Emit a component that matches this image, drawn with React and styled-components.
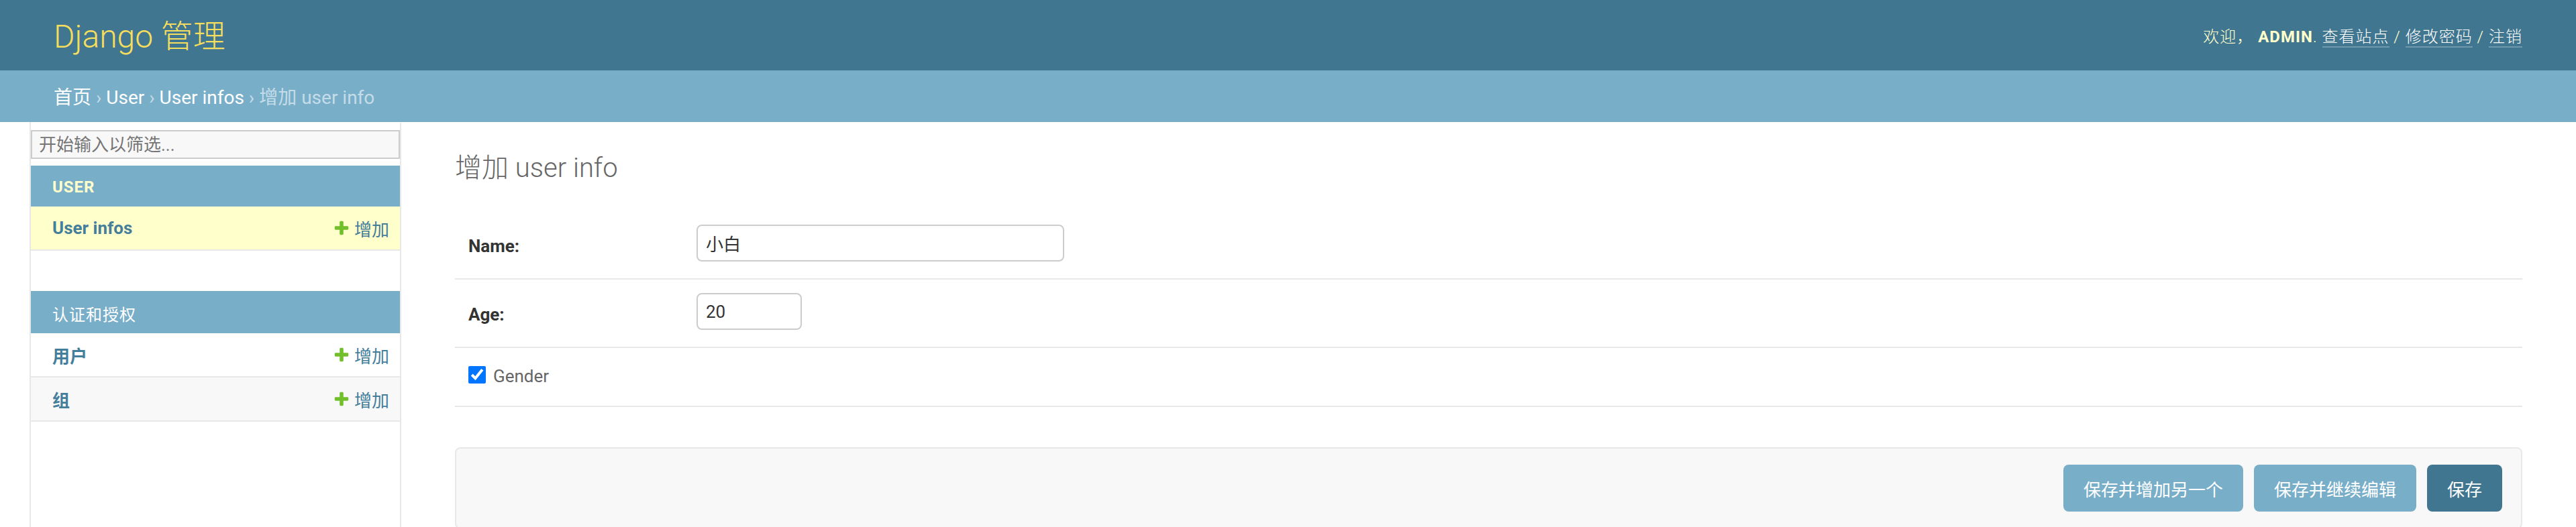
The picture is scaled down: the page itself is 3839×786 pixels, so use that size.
import styled, { createGlobalStyle } from "styled-components";

const GlobalStyle = createGlobalStyle`
  html, body {
    margin: 0;
    padding: 0;
  }
  body {
    font-family: Roboto, "Noto Sans CJK SC", sans-serif;
    color: #333;
    background: #fff;
  }
  #root {
    min-height: 100vh;
    display: flex;
    flex-direction: column;
  }
`

const Header = styled.header`
  display: flex;
  justify-content: space-between;
  align-items: center;
  box-sizing: border-box;
  height: 105px;
  padding: 0 80px;
  background: #417690;
  color: #ffc;
`

const SiteName = styled.h1`
  margin: 0;
  padding-top: 4px;
  font-size: 48px;
  font-weight: 300;
  line-height: 1;
  color: #f5dd5d;
`

const UserTools = styled.div`
  font-size: 24px;
  font-weight: 300;
  letter-spacing: 1px;
  text-transform: uppercase;
  color: #ffc;

  strong {
    font-weight: 700;
  }
`

const ToolLink = styled.a`
  color: #fff;
  text-decoration: none;
  border-bottom: 2px solid rgba(255, 255, 255, 0.25);
`

const Breadcrumbs = styled.div`
  box-sizing: border-box;
  height: 77px;
  padding: 4px 80px 0;
  line-height: 73px;
  font-size: 28px;
  background: #79aec8;
  color: #c4dce8;
`

const Crumb = styled.a`
  color: #fff;
  text-decoration: none;
`

const Main = styled.div`
  display: flex;
  flex: 1;
`

const SidebarToggle = styled.button`
  flex: 0 0 46px;
  padding: 0;
  border: none;
  border-right: 2px solid #e8e8e8;
  background: #fff;
`

const Sidebar = styled.nav`
  flex: 0 0 552px;
  box-sizing: border-box;
  border-top: 2px solid transparent;
  border-right: 2px solid #e8e8e8;
  background: #fff;
`

const NavFilter = styled.input`
  display: block;
  box-sizing: border-box;
  width: 100%;
  height: 43px;
  margin: 10px 0;
  padding: 0 10px;
  border: 2px solid #ccc;
  background: #f8f8f8;
  font-family: Roboto, "Noto Sans CJK SC", sans-serif;
  font-size: 26px;
  color: #333;

  &::placeholder {
    color: #757575;
  }
`

const AppSection = styled.div`
  margin-bottom: 60px;
`

const AppCaption = styled.div`
  box-sizing: border-box;
  height: ${p => p.$h}px;
  padding: 3px 32px 0;
  display: flex;
  align-items: center;
  background: #79aec8;
  color: ${p => (p.$current ? "#ffc" : "#fff")};
  font-size: 24px;
  font-weight: ${p => (p.$current ? 700 : 400)};
  letter-spacing: 1px;
  text-transform: uppercase;
`

const ModelRow = styled.div`
  display: flex;
  justify-content: space-between;
  align-items: center;
  height: 64px;
  padding: 0 16px 0 32px;
  border-bottom: 2px solid #e8e8e8;
  background: ${p => (p.$current ? "#ffc" : p.$even ? "#f8f8f8" : "#fff")};
  font-size: 26px;
`

const ModelLink = styled.a`
  color: #447e9b;
  font-weight: 700;
  text-decoration: none;
`

const AddLink = styled.a`
  display: inline-flex;
  align-items: center;
  color: #447e9b;
  text-decoration: none;

  svg {
    margin-right: 6px;
  }
`

const Content = styled.div`
  flex: 1;
  padding: 40px 80px;
`

const Title = styled.h1`
  margin: 0 0 37px;
  padding-top: 2px;
  font-size: 40px;
  font-weight: 300;
  line-height: 54px;
  color: #666;
`

const Fieldset = styled.div`
  margin-bottom: 60px;
`

const FormRow = styled.div`
  display: flex;
  align-items: flex-start;
  padding: 20px;
  border-bottom: 2px solid #e8e8e8;
`

const Label = styled.label`
  box-sizing: border-box;
  width: 340px;
  padding: 19px 20px 0 0;
  font-size: 26px;
  font-weight: 700;
  line-height: 26px;
  color: #333;
`

const Field = styled.div`
  min-height: 60px;
`

const TextInput = styled.input`
  box-sizing: border-box;
  width: ${p => p.$w}px;
  height: 55px;
  padding: 0 12px;
  border: 2px solid #ccc;
  border-radius: 8px;
  background: #fff;
  font-family: Roboto, "Noto Sans CJK SC", sans-serif;
  font-size: 26px;
  color: #333;
`

const CheckField = styled.div`
  display: flex;
  align-items: center;
  gap: 11px;
  height: 40px;
  padding-bottom: 6px;
`

const Checkbox = styled.input`
  width: 26px;
  height: 26px;
  margin: 0;
`

const CheckLabel = styled.label`
  padding-top: 4px;
  font-size: 26px;
  color: #666;
`

const SubmitRow = styled.div`
  display: flex;
  justify-content: flex-end;
  gap: 16px;
  padding: 24px 28px;
  border: 2px solid #e8e8e8;
  border-radius: 8px;
  background: #f8f8f8;
`

const SaveButton = styled.button`
  height: 70px;
  padding: 0 30px;
  border: none;
  border-radius: 8px;
  background: ${p => (p.$default ? "#417690" : "#79aec8")};
  color: #fff;
  font-family: Roboto, "Noto Sans CJK SC", sans-serif;
  font-size: 26px;
`

const PlusIcon = () => (
  <svg width="26" height="26" viewBox="0 0 1792 1792">
    <path
      fill="#70bf2b"
      d="M1600 796v192q0 40-28 68t-68 28h-416v416q0 40-28 68t-68 28h-192q-40 0-68-28t-28-68v-416h-416q-40 0-68-28t-28-68v-192q0-40 28-68t68-28h416v-416q0-40 28-68t68-28h192q40 0 68 28t28 68v416h416q40 0 68 28t28 68z"
    />
  </svg>
)

const apps = [
  {
    name: "User",
    current: true,
    h: 61,
    models: [{ name: "User infos", current: true }],
  },
  {
    name: "认证和授权",
    h: 63,
    models: [{ name: "用户" }, { name: "组" }],
  },
]

const App = () => {
  return (
    <>
      <GlobalStyle />
      <Header>
        <SiteName>Django 管理</SiteName>
        <UserTools>
          欢迎， <strong>admin</strong>.{" "}
          <ToolLink href="#">查看站点</ToolLink> /{" "}
          <ToolLink href="#">修改密码</ToolLink> /{" "}
          <ToolLink href="#">注销</ToolLink>
        </UserTools>
      </Header>
      <Breadcrumbs>
        <Crumb href="#">首页</Crumb> › <Crumb href="#">User</Crumb> ›{" "}
        <Crumb href="#">User infos</Crumb> › 增加 user info
      </Breadcrumbs>
      <Main>
        <SidebarToggle aria-label="Toggle navigation" />
        <Sidebar>
          <NavFilter placeholder="开始输入以筛选..." />
          {apps.map(app => (
            <AppSection key={app.name}>
              <AppCaption $current={app.current} $h={app.h}>{app.name}</AppCaption>
              {app.models.map((m, i) => (
                <ModelRow key={m.name} $current={m.current} $even={i % 2 === 1}>
                  <ModelLink href="#">{m.name}</ModelLink>
                  <AddLink href="#">
                    <PlusIcon />
                    增加
                  </AddLink>
                </ModelRow>
              ))}
            </AppSection>
          ))}
        </Sidebar>
        <Content>
          <Title>增加 user info</Title>
          <Fieldset>
            <FormRow>
              <Label htmlFor="id_name">Name:</Label>
              <Field>
                <TextInput id="id_name" $w={548} defaultValue="小白" />
              </Field>
            </FormRow>
            <FormRow>
              <Label htmlFor="id_age">Age:</Label>
              <Field>
                <TextInput id="id_age" $w={157} defaultValue="20" />
              </Field>
            </FormRow>
            <FormRow>
              <CheckField>
                <Checkbox type="checkbox" id="id_gender" defaultChecked />
                <CheckLabel htmlFor="id_gender">Gender</CheckLabel>
              </CheckField>
            </FormRow>
          </Fieldset>
          <SubmitRow>
            <SaveButton>保存并增加另一个</SaveButton>
            <SaveButton>保存并继续编辑</SaveButton>
            <SaveButton $default>保存</SaveButton>
          </SubmitRow>
        </Content>
      </Main>
    </>
  )
}

export default App
